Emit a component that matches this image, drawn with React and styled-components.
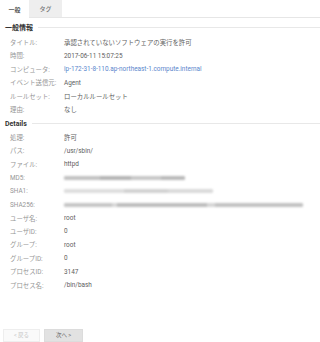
import styled, { createGlobalStyle } from "styled-components";

const GlobalStyle = createGlobalStyle`
  html, body {
    margin: 0;
    padding: 0;
    background: #fff;
  }
  body {
    font-family: Roboto, "Noto Sans CJK JP", sans-serif;
    -webkit-font-smoothing: antialiased;
  }
`;

const Page = styled.div`
  width: 320px;
  height: 342px;
  overflow: hidden;
  display: flex;
  flex-direction: column;
`;

const TabBar = styled.div`
  display: flex;
  height: 17px;
  border-bottom: 1px solid #e6e6e6;
`;

const Tab = styled.div`
  width: ${(p) => (p.$active ? "29px" : "33px")};
  display: flex;
  align-items: center;
  justify-content: center;
  font-size: 6px;
  font-weight: 500;
  color: ${(p) => (p.$active ? "#333" : "#777")};
  background: ${(p) => (p.$active ? "#fff" : "#eeeeee")};
  margin-bottom: ${(p) => (p.$active ? "-1px" : "0")};
`;

const Content = styled.div`
  padding: 0 0 0 5px;
`;

const SectionHeader = styled.div`
  display: flex;
  align-items: center;
  gap: 5px;
  height: 13.44px;
  margin-top: ${(p) => (p.$first ? "2.6px" : "1px")};
  margin-bottom: ${(p) => (p.$first ? "1.6px" : "0")};
  font-size: 7px;
  font-weight: 700;
  color: #333;

  &::after {
    content: "";
    flex: 1;
    height: 1px;
    background: #e8e8e8;
  }
`;

const Row = styled.div`
  display: grid;
  grid-template-columns: 54px 1fr;
  align-items: center;
  height: 13.44px;
  padding-left: 5px;
  font-size: 6.4px;
  white-space: nowrap;
`;

const Label = styled.span`
  color: #969696;
`;

const Value = styled.span`
  color: ${(p) => (p.$link ? "#5a86cc" : "#606060")};
`;

const Blur = styled.div`
  height: 4px;
  border-radius: 1px;
  filter: blur(1px);
  background: ${(p) => p.$bg};
`;

const Footer = styled.div`
  display: flex;
  gap: 4px;
  padding-left: 3px;
  margin-top: 37px;
`;

const Button = styled.div`
  width: ${(p) => p.$w};
  height: 13px;
  display: flex;
  align-items: center;
  justify-content: center;
  font-size: 5.5px;
  color: ${(p) => (p.$disabled ? "#c4c4c4" : "#666")};
  background: ${(p) => (p.$disabled ? "#fafafa" : "#e2e2e2")};
  border: 1px solid ${(p) => (p.$disabled ? "#eeeeee" : "#dcdcdc")};
  box-sizing: border-box;
`;

const general = [
  ["タイトル:", "承認されていないソフトウェアの実行を許可"],
  ["時間:", "2017-06-11 15:07:25"],
  ["コンピュータ:", "ip-172-31-8-110.ap-northeast-1.compute.internal", true],
  ["イベント送信元:", "Agent"],
  ["ルールセット:", "ローカルルールセット"],
  ["理由:", "なし"],
];

const hashes = {
  MD5: { width: 121, bg: "linear-gradient(90deg, #c2c2c2 0 30%, #b4b4b4 30% 55%, #c8c8c8 55% 80%, #bababa 80%)" },
  SHA1: { width: 149, bg: "linear-gradient(90deg, #dedede 0 40%, #d2d2d2 40% 70%, #dadada 70%)" },
  SHA256: { width: 239, bg: "linear-gradient(90deg, #c6c6c6 0 20%, #d8d8d8 20% 22%, #bdbdbd 22% 60%, #d6d6d6 60% 63%, #c2c2c2 63%)" },
};

const details = [
  ["処理:", "許可"],
  ["パス:", "/usr/sbin/"],
  ["ファイル:", "httpd"],
  ["MD5:", null, "MD5"],
  ["SHA1:", null, "SHA1"],
  ["SHA256:", null, "SHA256"],
  ["ユーザ名:", "root"],
  ["ユーザID:", "0"],
  ["グループ:", "root"],
  ["グループID:", "0"],
  ["プロセスID:", "3147"],
  ["プロセス名:", "/bin/bash"],
];

export default function App() {
  return (
    <Page>
      <GlobalStyle />
      <TabBar>
        <Tab $active>一般</Tab>
        <Tab>タグ</Tab>
      </TabBar>
      <Content>
        <SectionHeader $first>一般情報</SectionHeader>
        {general.map(([label, value, link]) => (
          <Row key={label}>
            <Label>{label}</Label>
            <Value $link={link}>{value}</Value>
          </Row>
        ))}
        <SectionHeader>Details</SectionHeader>
        {details.map(([label, value, hash]) => (
          <Row key={label}>
            <Label>{label}</Label>
            {hash ? (
              <Blur style={{ width: hashes[hash].width }} $bg={hashes[hash].bg} />
            ) : (
              <Value>{value}</Value>
            )}
          </Row>
        ))}
      </Content>
      <Footer>
        <Button $w="37px" $disabled>&lt; 戻る</Button>
        <Button $w="39px">次へ &gt;</Button>
      </Footer>
    </Page>
  );
}
